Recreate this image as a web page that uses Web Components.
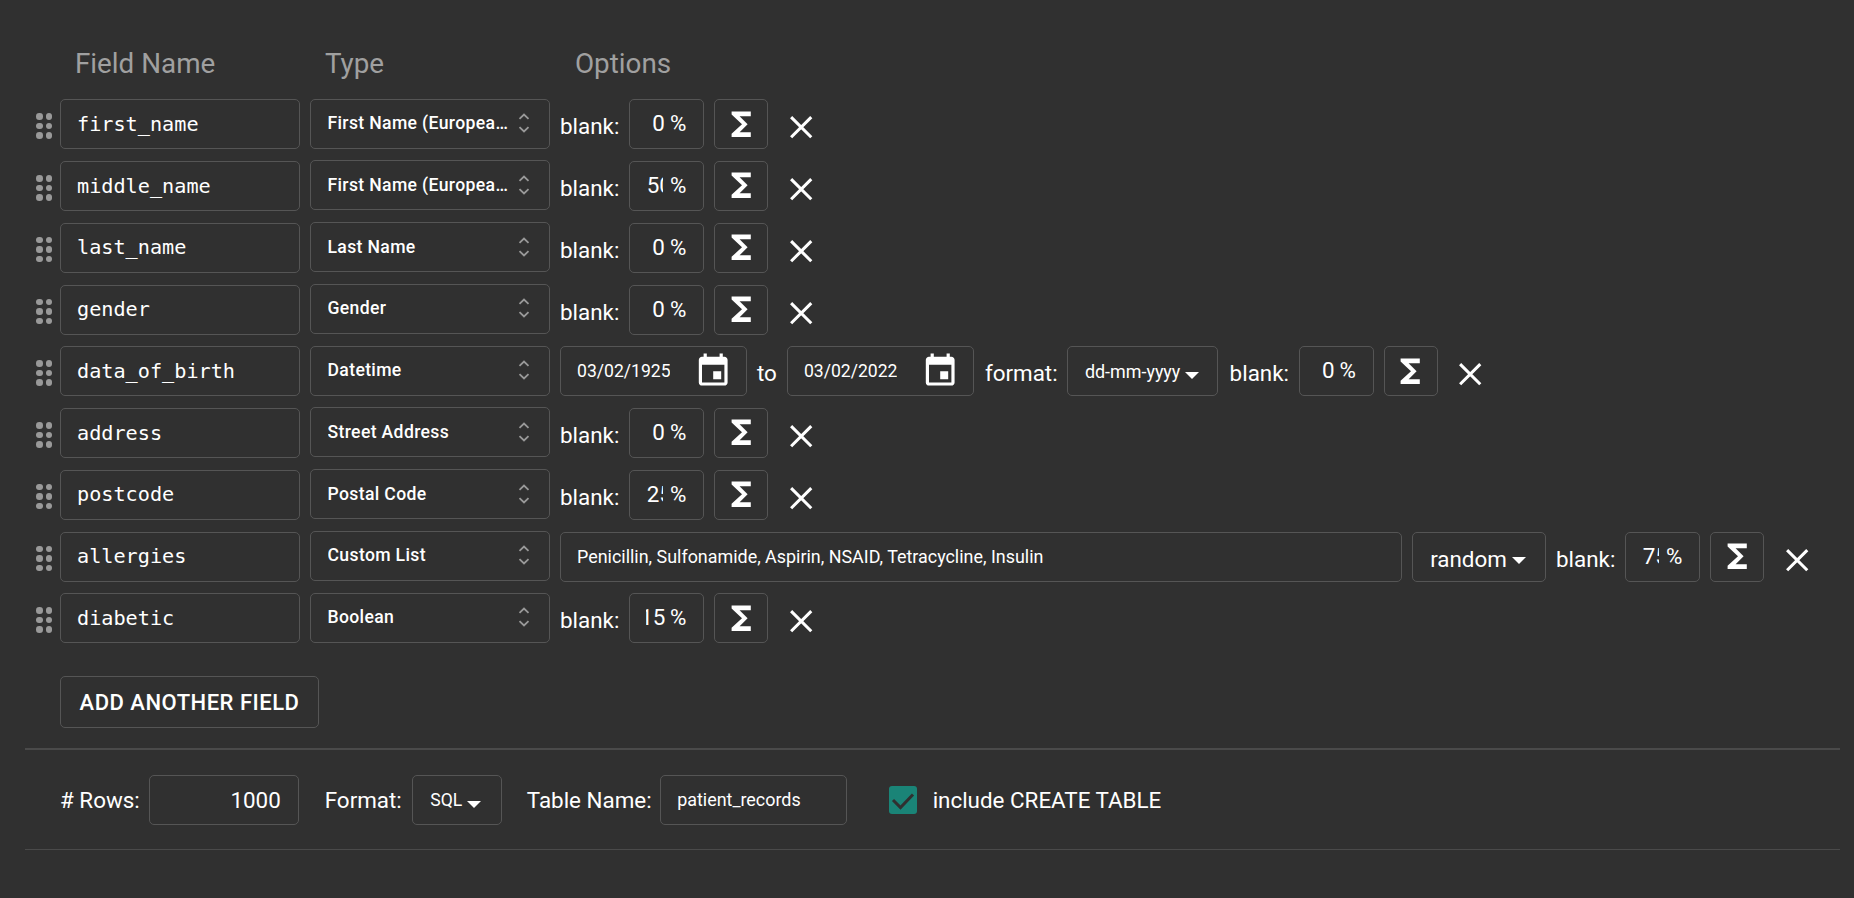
<!DOCTYPE html>
<html><head><meta charset="utf-8"><style>
html,body{margin:0;background:#303030;color:#fff;font-family:Roboto,sans-serif;}
body{width:1854px;height:898px;overflow:hidden;}
.t{font-size:22.4px;line-height:24px;margin-top:15px}
</style></head><body>
<data-form>
<col-heads></col-heads>
<field-row name="first_name" type="First Name (European)" ><blank-group value="0"></blank-group></field-row>
<field-row name="middle_name" type="First Name (European)"><blank-group value="50"></blank-group></field-row>
<field-row name="last_name" type="Last Name"><blank-group value="0"></blank-group></field-row>
<field-row name="gender" type="Gender"><blank-group value="0"></blank-group></field-row>
<field-row name="data_of_birth" type="Datetime">
  <date-box value="03/02/1925"></date-box><span class="t" style="margin-left:10px;margin-right:10px">to</span><date-box value="03/02/2022"></date-box>
  <span class="t" style="margin-left:11px;margin-right:9px">format:</span><drop-box label="dd-mm-yyyy" small style="width:151px;margin-right:12px"></drop-box>
  <blank-group value="0"></blank-group></field-row>
<field-row name="address" type="Street Address"><blank-group value="0"></blank-group></field-row>
<field-row name="postcode" type="Postal Code"><blank-group value="25"></blank-group></field-row>
<field-row name="allergies" type="Custom List"><text-box value="Penicillin, Sulfonamide, Aspirin, NSAID, Tetracycline, Insulin" style="width:842px"></text-box><drop-box label="random" style="width:134px"></drop-box><blank-group value="75"></blank-group></field-row>
<field-row name="diabetic" type="Boolean"><blank-group value="15"></blank-group></field-row>
<add-button>ADD ANOTHER FIELD</add-button>
<bottom-bar></bottom-bar>
</data-form>
<script>
const ic={
 sum:'<svg width="38.4" height="38.4" viewBox="0 0 24 24" fill="#fff"><path d="M18 4H6v2l6.5 6L6 18v2h12v-3h-7l5-5-5-5h7z"/></svg>',
 x:'<svg width="38.4" height="38.4" viewBox="0 0 24 24" fill="none" stroke="#fff" stroke-width="1.9"><path d="M5.7 5.7L18.3 18.3M18.3 5.7L5.7 18.3"/></svg>',
 cal:'<svg width="38.4" height="38.4" viewBox="0 0 24 24" fill="#fff"><path d="M17 12h-5v5h5v-5zM16 1v2H8V1H6v2H5c-1.11 0-1.99.9-1.99 2L3 19c0 1.1.89 2 2 2h14c1.1 0 2-.9 2-2V5c0-1.1-.9-2-2-2h-1V1h-2zm3 18H5V8h14v11z"/></svg>'
};
const box='box-sizing:border-box;border:1px solid #555;border-radius:5px;height:50px;';
function def(n,f){customElements.define(n,class extends HTMLElement{connectedCallback(){if(this.shadowRoot)return;this.attachShadow({mode:'open'}).innerHTML=f(this);}});}
def('data-form',()=>`<style>:host{display:block;padding:46px 14px 0 25px;}</style><slot></slot>`);
def('col-heads',()=>`<style>:host{display:flex;padding:0 0 2px 50px;box-sizing:border-box;height:36px;margin-bottom:17.3px;align-items:center;font-size:27.8px;color:#a0a0a0;}
span{width:250px}</style><span>Field Name</span><span>Type</span><span>Options</span>`);
def('field-row',h=>`<style>:host{display:flex;height:61.75px;align-items:flex-start;}
.drag{width:35px;display:grid;grid-template-columns:6.5px 6.5px;gap:3px;padding:14px 0 0 11px;box-sizing:border-box;align-content:start;height:50px}
.drag i{width:6.5px;height:6.5px;border-radius:50%;background:#999}
.name{${box}width:240px;margin-right:10px;font:20.2px "DejaVu Sans Mono",monospace;padding:0 16px 1px;display:flex;align-items:center;}
.type{${box}width:240px;margin:-.6px 10px 0 0;font:500 17.6px Roboto,sans-serif;letter-spacing:.35px;padding:0 19px 1px 16.5px;display:flex;align-items:center;justify-content:space-between;}
.type span{overflow:hidden;white-space:nowrap;text-overflow:ellipsis;width:184px}
svg{flex:none}
slot{display:contents}
</style>
<div class="drag">${'<i></i>'.repeat(6)}</div>
<div class="name">${h.getAttribute('name')}</div>
<div class="type"><span>${h.getAttribute('type')}</span><svg width="12" height="22" viewBox="0 0 12 22" fill="none" stroke="#999" stroke-width="1.8"><path d="M1.5 6.8L6 2.5l4.5 4.3M1.5 15.2L6 19.5l4.5-4.3"/></svg></div>
<slot></slot>`);
def('blank-group',h=>{const v=h.getAttribute('value');const two=v.length>1;const left=v==='15';
return `<style>:host{display:flex;align-items:flex-start;font-size:22.4px;}
.l{margin-top:15px;line-height:24px;width:69px;}
.p{${box}width:75px;margin-right:10px;display:flex;align-items:center;padding-bottom:2px;}
.clip{display:block;width:${left?19:two?17:19}px;margin-left:16px;overflow:hidden;white-space:nowrap;}
.clip b{font-weight:400;display:block;margin-left:${left?'-5.8px':two?'.7px':'6.3px'}}
.pc{margin-left:${left?5:two?7:5}px;}
.s{${box}width:54px;display:flex;align-items:center;justify-content:center;padding-bottom:1px}
.x{margin:9px 0 0 13.6px;height:38.4px;display:block}
.x svg{display:block}
</style><span class="l">blank:</span><div class="p"><span class="clip"><b>${v}</b></span><span class="pc">%</span></div><div class="s">${ic.sum}</div><div class="x">${ic.x}</div>`});
def('date-box',h=>`<style>:host{${box}width:187px;display:flex;align-items:center;padding-left:16px;font-size:17.6px;}
span{width:93px;overflow:hidden;white-space:nowrap;margin-right:24.2px;}
svg{flex:none}</style><span>${h.getAttribute('value')}</span>${ic.cal}`);
def('drop-box',h=>{const s=h.hasAttribute('small');return `<style>:host{${box}display:flex;align-items:center;justify-content:center;font-size:${s?17.92:22.4}px;margin-right:10px;padding-right:${s?0:2}px}
span{padding-top:${s?0:4}px}
i{width:0;height:0;border:7.5px solid transparent;border-top:7.5px solid #fff;border-bottom:0;margin:8px 0 0 5px}</style><span>${h.getAttribute('label')}</span><i></i>`});
def('text-box',h=>`<style>:host{${box}display:flex;align-items:center;padding:0 16px;font-size:17.92px;margin-right:10px}</style>${h.getAttribute('value')}`);
def('add-button',h=>`<style>:host{${box}display:flex;align-items:center;justify-content:center;width:259px;height:52px;margin:21px 0 0 35px;font-weight:500;font-size:22px;letter-spacing:.5px}</style><slot></slot>`);
def('bottom-bar',()=>`<style>:host{display:block;margin-top:20px}
.r{border-top:2px solid #4a4a4a;border-bottom:1px solid #4a4a4a;height:98px;padding-top:1px;display:flex;align-items:center;padding-left:35px;font-size:22.4px;box-sizing:content-box}
.b{${box}display:flex;align-items:center;}
.rows{width:150px;justify-content:flex-end;padding:0 17px 1px 0;margin:0 26px 0 9px}
.fmt{width:90px;justify-content:center;margin:0 25px 0 10px;font-size:17.6px;padding-bottom:1px}
.fmt i{width:0;height:0;border:7.5px solid transparent;border-top:7.5px solid #fff;border-bottom:0;margin:9px 2px 0 5px}
.tn{width:187px;padding:0 16px 1px;font-size:17.92px;margin:0 41.5px 0 8.5px;}
.c{width:28px;height:28px;background:#1a8477;border-radius:3px;margin-right:16px;display:block}
</style><div class="r"><span>
# Rows:</span><div class="b rows">1000</div><span>Format:</span><div class="b fmt">SQL<i></i></div><span>Table Name:</span><div class="b tn">patient_records</div>
<svg class="c" viewBox="0 0 28 28" fill="none" stroke="#303030" stroke-width="3"><path d="M4 14l7.5 7.5L24 8.5"/></svg><span>include CREATE TABLE</span></div>`);
</script></body></html>
